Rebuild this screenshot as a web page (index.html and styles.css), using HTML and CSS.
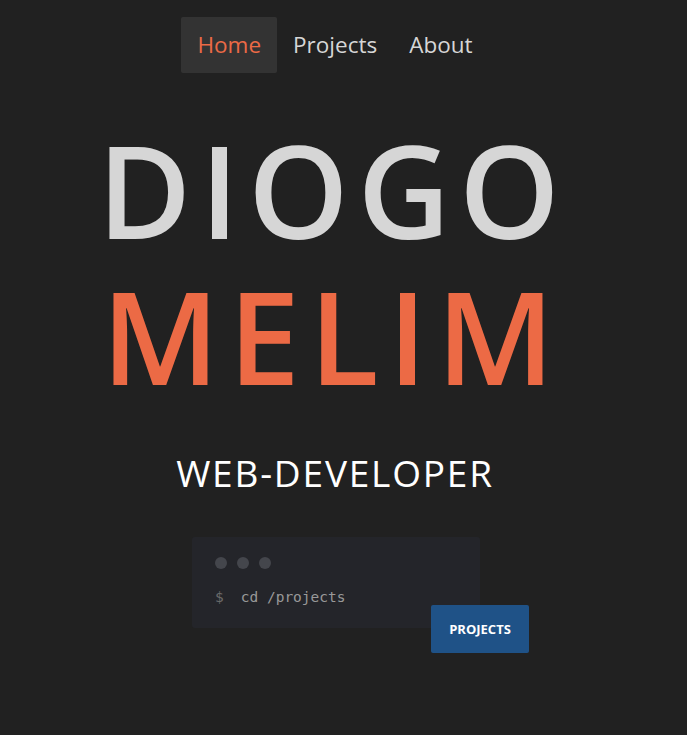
FILE: index.html
```html
<!DOCTYPE html>
<html lang="en">
<head>
<meta charset="utf-8">
<title>Diogo Melim</title>
<link rel="stylesheet" href="styles.css">
</head>
<body>
<div class="page">
  <nav class="nav">
    <a class="nav-link active" href="#">Home</a>
    <a class="nav-link" href="#">Projects</a>
    <a class="nav-link" href="#">About</a>
  </nav>
  <h1 class="name">
    <span class="first">DIOGO</span>
    <span class="last">MELIM</span>
  </h1>
  <h2 class="role">WEB-DEVELOPER</h2>
  <div class="terminal-wrap">
    <div class="terminal">
      <div class="dots"><span></span><span></span><span></span></div>
      <div class="cmd"><span class="prompt">$</span>cd /projects</div>
    </div>
    <a class="btn" href="#">PROJECTS</a>
  </div>
</div>
</body>
</html>
```
FILE: styles.css
```css
html, body {
  margin: 0;
  padding: 0;
  background: #212121;
}
body {
  font-family: "Open Sans", "Noto Sans", sans-serif;
  width: 687px;
  height: 735px;
  overflow: hidden;
}
.page {
  display: flex;
  flex-direction: column;
  align-items: center;
}
.nav {
  display: flex;
  margin-top: 17px;
  margin-right: 17px;
}
.nav-link {
  display: block;
  font-size: 22.5px;
  line-height: 56px;
  height: 56px;
  padding: 0 16px;
  color: #d6d6d6;
  text-decoration: none;
  border-radius: 2px;
}
.nav-link.active {
  background: #333333;
  color: #eb6a46;
}
.name {
  margin: 45px 0 0;
  display: flex;
  flex-direction: column;
  align-items: center;
  font-weight: 600;
  font-size: 128px;
  line-height: 144px;
}
.first {
  color: #d6d6d6;
  letter-spacing: 8.75px;
  padding-right: 21px;
}
.last {
  color: #ec6a45;
  letter-spacing: 9.25px;
  padding-right: 22px;
  margin-top: 2px;
}
.role {
  margin: 40px 0 0;
  font-weight: 400;
  font-size: 37px;
  line-height: 50px;
  color: #ffffff;
  letter-spacing: 1.8px;
  padding-right: 17px;
}
.terminal-wrap {
  position: relative;
  margin-top: 39px;
  margin-right: 15px;
}
.terminal {
  width: 288px;
  height: 91px;
  box-sizing: border-box;
  background: #24252a;
  border-radius: 3px;
  padding: 20px 23px;
}
.dots {
  display: flex;
  gap: 10px;
}
.dots span {
  width: 12px;
  height: 12px;
  border-radius: 50%;
  background: #44464c;
}
.cmd {
  margin-top: 18px;
  font-family: "DejaVu Sans Mono", "Liberation Mono", monospace;
  font-size: 14.5px;
  color: #999999;
  font-weight: normal;
  line-height: 20px;
}
.prompt {
  color: #6b6b6b;
  margin-right: 17px;
}
.btn {
  position: absolute;
  left: 239px;
  top: 68px;
  width: 98px;
  height: 48px;
  line-height: 48px;
  text-align: center;
  background: #1f5287;
  color: #ffffff;
  font-size: 13px;
  font-weight: 700;
  text-decoration: none;
  border-radius: 2px;
}
```
